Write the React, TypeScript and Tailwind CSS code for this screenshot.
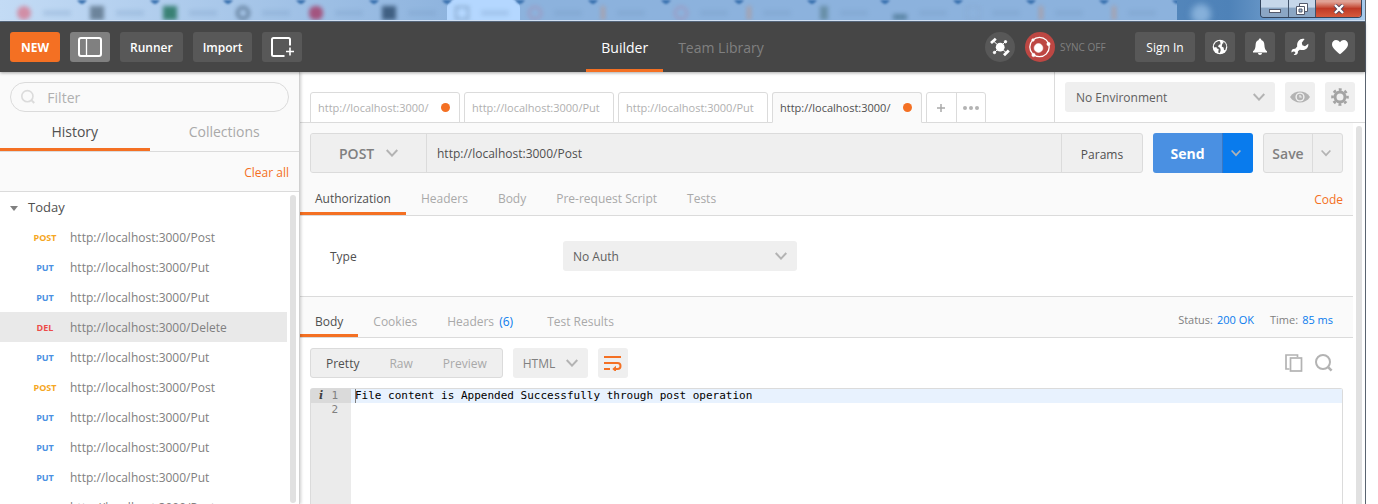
import React from "react";

type IconProps = { className?: string };

const browserTabs = [
  { icon: "bg-[#d67c93] rounded-full", current: false },
  { icon: "bg-[#5a7187]", current: false },
  { icon: "bg-[#1c6f57]", current: false },
  { icon: "border-3 border-[#4a6580] rounded-full", current: false },
  { icon: "bg-[#a53a66] rounded-md", current: false },
  { icon: "bg-[#2b4a6b]", current: false },
  { icon: "border-2 border-[#7d9dc0]", current: true },
  { icon: "border-2 border-[#a58fb4] rounded-full", current: false },
  { icon: "bg-[#b09c9c] w-1", current: false },
  { icon: "border-2 border-[#a58fb4] rounded-full", current: false },
  { icon: "bg-[#b09c9c] w-1", current: false },
  { icon: "bg-[#5f869a] w-2", current: false },
  { icon: "bg-[#4f7a98] h-1.5", current: false },
  { icon: "border border-[#86a4c8]", current: false },
  { icon: "bg-[#b09c9c] w-1", current: false },
  { icon: "bg-[#b09c9c] w-1", current: false },
];

const history = [
  { method: "POST", url: "http://localhost:3000/Post" },
  { method: "PUT", url: "http://localhost:3000/Put" },
  { method: "PUT", url: "http://localhost:3000/Put" },
  { method: "DEL", url: "http://localhost:3000/Delete", selected: true },
  { method: "PUT", url: "http://localhost:3000/Put" },
  { method: "POST", url: "http://localhost:3000/Post" },
  { method: "PUT", url: "http://localhost:3000/Put" },
  { method: "PUT", url: "http://localhost:3000/Put" },
  { method: "PUT", url: "http://localhost:3000/Put" },
  { method: "POST", url: "http://localhost:3000/Post" },
];

const methodColors: Record<string, string> = {
  POST: "text-[#f5a623]",
  PUT: "text-[#4a90e2]",
  DEL: "text-[#ed4b48]",
};

const requestTabs = [
  { label: "http://localhost:3000/", dirty: true, active: false },
  { label: "http://localhost:3000/Put", dirty: false, active: false },
  { label: "http://localhost:3000/Put", dirty: false, active: false },
  { label: "http://localhost:3000/", dirty: true, active: true },
];

function Chevron({ className = "" }: IconProps) {
  return (
    <svg viewBox="0 0 12 8" className={className} fill="none" stroke="currentColor" strokeWidth="2" aria-hidden="true">
      <path d="M.7 1 6 6.6 11.3 1" />
    </svg>
  );
}

function SearchIcon({ className = "" }: IconProps) {
  return (
    <svg viewBox="0 0 18 18" className={className} fill="none" stroke="currentColor" aria-hidden="true">
      <circle cx="8" cy="8" r="7" strokeWidth="2" />
      <path d="m12.6 12.6 4 4" strokeWidth="2.6" />
    </svg>
  );
}

function SidebarIcon() {
  return (
    <svg viewBox="0 0 24 20" className="h-5 w-6" fill="none" stroke="#fff" aria-hidden="true">
      <rect x="1" y="1" width="22" height="18" rx="2" strokeWidth="2" />
      <path d="M8.5 2v16" strokeWidth="1.3" />
    </svg>
  );
}

function NewWindowIcon() {
  return (
    <svg viewBox="0 0 24 20" className="h-5 w-6" fill="none" stroke="#fff" aria-hidden="true">
      <path d="M20 8.5V2.5Q20 1 18.500 1H3.500Q2 1 2 2.500V17.500Q2 19 3.500 19H14.500" strokeWidth="2" />
      <path d="M20 10.500V18.500M16 14.500H24" strokeWidth="1.6" />
    </svg>
  );
}

function SatelliteIcon() {
  return (
    <svg viewBox="0 0 30 30" className="size-[30px]" fill="#fff" stroke="#fff" aria-hidden="true">
      <path d="M9 9.500 21 20.500M20.300 9.700 9.700 20.300" strokeWidth="1" />
      <circle cx="15.200" cy="15.200" r="4.400" stroke="none" />
      <path d="m6 11 4.800-4.200M19 23.200l4.800-4.800" strokeWidth="2.800" />
      <circle cx="20.500" cy="9.700" r="1.200" />
      <circle cx="9.500" cy="20.500" r="1.200" />
    </svg>
  );
}

function OrbitIcon() {
  return (
    <svg viewBox="0 0 30 30" className="size-[30px]" fill="#fff" stroke="#fff" aria-hidden="true">
      <circle cx="14.500" cy="15" r="9.700" fill="none" strokeWidth="1.300" />
      <circle cx="13.500" cy="16" r="4.400" strokeWidth="0.500" />
      <circle cx="8" cy="8" r="1.300" strokeWidth="0.500" />
      <circle cx="23.500" cy="12" r="1.700" strokeWidth="0.500" />
      <circle cx="8.500" cy="23" r="1.700" strokeWidth="0.500" />
    </svg>
  );
}

function GlobeIcon() {
  return (
    <svg viewBox="0 0 16 16" className="size-4" aria-hidden="true">
      <circle cx="8" cy="8" r="7.300" fill="#fff" />
      <path d="M8 2.300 6.500 2 3.600 3.600 1.800 6.500 2.200 8.600 4.300 7.900 5 9.400 6.700 10 6.200 13.600 7.800 14 8.700 11.300 8.200 9 6 7.400 7 5.800 8.600 5.200Z" fill="#585858" />
      <path d="m10.500 2.200 2.700 1.900 1.200 3-1.200 4.200-1.200-.3-.4-2.400-1.900-1.200.6-2.600 1.400-.8Z" fill="#585858" />
    </svg>
  );
}

function BellIcon() {
  return (
    <svg viewBox="0 0 16 18" className="h-[18px] w-4" fill="#fff" aria-hidden="true">
      <path d="M8 .5c.8 0 1.300.6 1.300 1.400 2.200.6 3 2.600 3.100 5.100.1 3 .8 5 2.600 6.200v1.300H1v-1.300C2.800 12 3.500 10 3.600 7c.1-2.500.9-4.500 3.100-5.100C6.700 1.100 7.200.5 8 .5ZM6 15h4c0 1.300-.9 2-2 2s-2-.7-2-2Z" />
    </svg>
  );
}

function WrenchIcon() {
  return (
    <svg viewBox="0 0 18 18" className="size-[18px]" fill="#fff" aria-hidden="true">
      <path d="M13.600 1.100 10.800 4.800l.6 2.500 2.600.9 3.300-2.500c.4 3-1.500 6-4.600 6.200-1.500.2-2.700-.1-3.900-.2l-1.900 1.500c.5 2.700-2 4.500-4.200 3.500l1.800-1.600-.7-1.400-1.600-.3L.500 14.500c-.5-2.300 1.400-4 3.500-3.600L6.200 8.500C5.500 4 8.800-.3 13.600 1.100Z" />
    </svg>
  );
}

function HeartIcon() {
  return (
    <svg viewBox="0 0 18 16" className="h-4 w-[18px]" fill="#fff" aria-hidden="true">
      <path d="M9 15.200C5.500 12.300 1 9 1 5.200 1 .7 6.500-.7 9 3.300c2.500-4 8-2.600 8 1.900 0 3.800-4.500 7.100-8 10Z" />
    </svg>
  );
}

function EyeIcon() {
  return (
    <svg viewBox="0 0 20 12" className="h-3 w-5" aria-hidden="true">
      <path d="M0 6C4.500-1.300 15.500-1.300 20 6 15.500 13.300 4.500 13.300 0 6Z" fill="#b3b3b3" />
      <circle cx="10" cy="6" r="4.600" fill="#efefef" />
      <circle cx="10" cy="6" r="3.200" fill="#b3b3b3" />
      <path d="M10 4V6h1.800" stroke="#efefef" fill="none" strokeWidth="1.200" />
    </svg>
  );
}

function GearIcon() {
  return (
    <svg viewBox="0 0 18 18" className="size-[18px]" fill="none" stroke="#a3a3a3" aria-hidden="true">
      <circle cx="9" cy="9" r="5" strokeWidth="3" />
      <circle cx="9" cy="9" r="7.500" strokeWidth="2.600" strokeDasharray="2.900 2.990" strokeDashoffset="1.450" />
    </svg>
  );
}

function WrapIcon() {
  return (
    <svg viewBox="0 0 18 16" className="h-4 w-[18px]" fill="none" stroke="#f47023" strokeWidth="2" aria-hidden="true">
      <path d="M0 2h17M0 8h13.500c4 0 4 6 0 6h-3M0 14h6" />
      <path d="M8.300 14 12 10.800v6.400Z" fill="#f47023" stroke="none" />
    </svg>
  );
}

function CopyIcon() {
  return (
    <svg viewBox="0 0 18 18" className="size-[18px]" fill="none" stroke="#b3b3b3" strokeWidth="1.700" aria-hidden="true">
      <path d="M12.500 3V1H1v14h3.500" />
      <rect x="5.500" y="4" width="11" height="13" />
    </svg>
  );
}

function TitleBar() {
  return (
    <div className="shrink-0 border-b border-[#5a6b80]">
      <div className="flex h-[21px] justify-between overflow-hidden border-b border-[#d3e3f5] bg-linear-to-r from-[#b5d3f3] via-[#4e82b8] via-90% to-[#a8cbed]">
        <div className="flex overflow-hidden bg-linear-to-r from-[#c3dbf5] to-[#8cb2dd] to-40% pl-[9px]">
          {browserTabs.map((tab, i) => (
            <div key={i} className={tab.current ? "flex w-[73px] rounded-t-lg bg-[#b4d7ff]" : "flex w-[73px]"}>
              <div className="flex grow items-end gap-3 pl-2 opacity-80 blur-[2px]">
                <span className={`size-3.5 ${tab.icon}`} />
                <span className="mb-1 h-1.5 w-7 bg-[#6f94bd]/30" />
              </div>
              <svg viewBox="0 0 12 6" className="-mr-1.5 h-1.5 w-3 blur-[1px]" aria-hidden="true">
                <path d="M1 0h10Q8 4 6 4T1 0Z" fill="#3870ae" />
              </svg>
            </div>
          ))}
        </div>
        <div className="flex grow pl-3.5 pt-1">
          <span className="size-5 rounded-full bg-[#86b0da] blur-[3px]" />
        </div>
        <div className="mr-[3px] flex h-[18px] overflow-hidden rounded-b border border-t-0 border-[#33445c]">
          <button aria-label="Minimize" className="grid w-7 place-items-center border-r border-[#41526a] bg-linear-to-b from-[#c6d7ea] from-40% to-[#8ba6c4] to-50%">
            <span className="mt-1 h-1 w-3 border border-[#53596b] bg-white" />
          </button>
          <button aria-label="Restore" className="grid w-[27px] place-items-center border-r border-[#41526a] bg-linear-to-b from-[#c6d7ea] from-40% to-[#8ba6c4] to-50%">
            <svg viewBox="0 0 12 12" className="size-3" fill="#fff" stroke="#53596b" aria-hidden="true">
              <path d="M3.500.5h8v8h-8Z" />
              <path d="M.5 3.500h8v8h-8Z" />
              <path d="M3 6h3v3H3Z" fill="#9db5cf" />
            </svg>
          </button>
          <button aria-label="Close" className="grid w-[45px] place-items-center bg-linear-to-b from-[#e0a295] from-10% via-[#bf3a26] via-50% to-[#d6593c]">
            <svg viewBox="0 0 12 10" className="h-2.5 w-3" fill="none" aria-hidden="true">
              <path d="m2 1 8 8M10 1 2 9" stroke="#53455a" strokeWidth="4" />
              <path d="m2 1 8 8M10 1 2 9" stroke="#fff" strokeWidth="2.400" />
            </svg>
          </button>
        </div>
      </div>
    </div>
  );
}

function Header() {
  const square = "grid size-[30px] place-items-center rounded-[3px] bg-[#585858]";
  const text = "h-[30px] rounded-[3px] bg-[#585858] pt-0.5 text-xs text-white";
  return (
    <header className="z-10 grid h-[50px] shrink-0 grid-cols-[1fr_auto_1fr] bg-[#464646] px-2.5 shadow-[0_1px_3px_rgba(0,0,0,0.35)]">
      <div className="flex items-center gap-2.5">
        <button className="h-[30px] w-[50px] rounded-[3px] bg-[#f47023] pt-0.5 text-xs font-bold text-white">NEW</button>
        <button aria-label="Toggle sidebar" className="grid h-[30px] w-10 place-items-center rounded-[3px] bg-[#808080]"><SidebarIcon /></button>
        <button className={`${text} px-2.5 font-semibold`}>Runner</button>
        <button className={`${text} px-2.5 font-semibold`}>Import</button>
        <button aria-label="New window" className="grid h-[30px] w-10 place-items-center rounded-[3px] bg-[#585858]"><NewWindowIcon /></button>
      </div>
      <nav className="flex text-sm">
        <a href="#builder" className="flex items-center border-b-3 border-[#f47023] px-[15px] pt-1 font-medium text-white">Builder</a>
        <a href="#library" className="flex items-center border-b-3 border-transparent px-[15px] pt-1 text-[#808080]">Team Library</a>
      </nav>
      <div className="flex items-center justify-end gap-2.5">
        <button aria-label="Interceptor" className="rounded-full bg-[#585858]"><SatelliteIcon /></button>
        <div className="flex w-[100px] items-center gap-[5px]">
          <button aria-label="Sync" className="rounded-full bg-[#bd4743]"><OrbitIcon /></button>
          <span className="text-[10px] whitespace-nowrap text-[#808080]">SYNC OFF</span>
        </div>
        <button className={`${text} w-[60px] font-medium`}>Sign In</button>
        <button aria-label="Browse" className={square}><GlobeIcon /></button>
        <button aria-label="Notifications" className={square}><BellIcon /></button>
        <button aria-label="Settings" className={square}><WrenchIcon /></button>
        <button aria-label="Favourites" className={square}><HeartIcon /></button>
      </div>
    </header>
  );
}

function Sidebar() {
  return (
    <aside className="z-[5] flex w-[300px] shrink-0 flex-col border-r border-[#d0d0d0] bg-[#fafafa] shadow-[1px_0_3px_rgba(0,0,0,0.2)]">
      <label className="mx-2.5 mt-2.5 flex h-[30px] shrink-0 items-center gap-3 rounded-full border border-[#dbdbdb] px-2.5 text-[#dbdbdb]">
        <SearchIcon className="size-4" />
        <input aria-label="Filter" placeholder="Filter" className="w-full bg-transparent pt-0.5 text-sm text-[#505050] outline-none placeholder:text-[#b0b0b0]" />
      </label>
      <div className="flex h-10 shrink-0 border-b border-[#dbdbdb] text-sm">
        <button className="flex-1 border-b-3 border-[#f47023] pt-1 text-[#505050]">History</button>
        <button className="flex-1 border-b-3 border-transparent pt-1 text-[#a9a9a9]">Collections</button>
      </div>
      <div className="flex h-10 shrink-0 items-center justify-end border-b border-[#dbdbdb] px-2.5 pt-0.5">
        <button className="text-xs text-[#f47023]">Clear all</button>
      </div>
      <div className="flex min-h-0 grow bg-white">
        <div className="grow overflow-hidden">
          <button className="flex h-[30px] items-center gap-2.5 pt-0.5 pl-2.5 text-[13px] text-[#505050]">
            <svg viewBox="0 0 8 5" className="h-[5px] w-2" aria-hidden="true"><path d="M0 0h8L4 5Z" fill="#808080" /></svg>
            Today
          </button>
          <ul>
            {history.map((item, i) => (
              <li key={i} className={item.selected ? "bg-[#e9e9e9]" : ""}>
                <a href="#request" className="flex h-[30px] items-center pt-0.5 pl-5 text-xs text-[#808080]">
                  <span className={`w-[50px] text-center text-[9px] font-bold ${methodColors[item.method]}`}>{item.method}</span>
                  {item.url}
                </a>
              </li>
            ))}
          </ul>
        </div>
        <div className="mx-[3px] mt-[3px] mb-px w-1.5 shrink-0 rounded-full bg-[#e1e1e1]" />
      </div>
    </aside>
  );
}

function Picker({ label, value, box, select, chevron }: { label: string; value: string; box: string; select: string; chevron: string }) {
  return (
    <div className={`grid items-center bg-[#efefef] ${box}`}>
      <select aria-label={label} className={`col-start-1 row-start-1 h-full w-full appearance-none bg-transparent pt-0.5 outline-none ${select}`}>
        <option>{value}</option>
      </select>
      <Chevron className={`pointer-events-none col-start-1 row-start-1 h-2 w-3 justify-self-end text-[#b3b3b3] ${chevron}`} />
    </div>
  );
}

function TabStrip() {
  return (
    <div className="flex h-[51px] shrink-0">
      <div className="flex min-w-0 grow items-end border-b border-[#dbdbdb] pl-2.5">
        <div className="-mb-px flex gap-1 text-[11px]">
          {requestTabs.map((tab, i) => (
            <button
              key={i}
              className={`flex h-[31px] w-[150px] items-center justify-between rounded-t-[3px] border border-[#dbdbdb] px-[7px] pt-0.5 ${
                tab.active ? "border-b-[#fafafa] bg-[#fafafa] text-[#505050]" : "bg-white text-[#b0b0b0]"
              }`}
            >
              {tab.label}
              {tab.dirty && <span className="mr-0.5 mb-0.5 size-[9px] rounded-full bg-[#f47023]" />}
            </button>
          ))}
          <div className="flex h-[31px] w-[60px] divide-x divide-[#dbdbdb] rounded-t-[3px] border border-[#dbdbdb]">
            <button aria-label="Add tab" className="grid flex-1 place-items-center">
              <svg viewBox="0 0 8 8" className="size-2" aria-hidden="true"><path d="M4 0v8M0 4h8" stroke="#a9a9a9" strokeWidth="1.500" /></svg>
            </button>
            <button aria-label="More tabs" className="grid flex-1 place-items-center">
              <svg viewBox="0 0 16 4" className="h-1 w-4" fill="#b3b3b3" aria-hidden="true"><circle cx="2" cy="2" r="2" /><circle cx="8" cy="2" r="2" /><circle cx="14" cy="2" r="2" /></svg>
            </button>
          </div>
        </div>
      </div>
      <div className="flex shrink-0 items-center gap-2.5 border-b border-l border-[#dbdbdb] px-2.5">
        <Picker label="Environment" value="No Environment" box="h-[30px] w-[210px] rounded-[3px]" select="pl-[11px] text-xs text-[#606060]" chevron="mr-2.5" />
        <button aria-label="Quick look" className="grid size-[30px] place-items-center rounded-[3px] bg-[#efefef]"><EyeIcon /></button>
        <button aria-label="Manage environments" className="grid size-[30px] place-items-center rounded-[3px] bg-[#efefef]"><GearIcon /></button>
      </div>
    </div>
  );
}

function SectionTab({ active = false, children }: { active?: boolean; children: React.ReactNode }) {
  return (
    <button className={`border-b-3 px-[15px] pt-3 ${active ? "border-[#f47023] text-[#505050]" : "border-transparent text-[#a9a9a9]"}`}>
      {children}
    </button>
  );
}

function RequestPanel() {
  return (
    <section>
      <div className="border-b border-[#dbdbdb] bg-[#fafafa]">
        <div className="flex h-[50px] gap-2.5 px-2.5 pt-2.5">
          <div className="flex grow divide-x divide-[#dbdbdb] overflow-hidden rounded-[3px] border border-[#dbdbdb] bg-[#efefef]">
            <Picker label="Method" value="POST" box="w-[116px]" select="pl-7 text-sm font-semibold text-[#808080]" chevron="mr-7" />
            <input aria-label="Request URL" defaultValue="http://localhost:3000/Post" className="min-w-0 grow bg-transparent px-2.5 pt-0.5 text-xs text-[#505050] outline-none" />
            <button className="w-20 pt-1 text-xs text-[#505050]">Params</button>
          </div>
          <div className="flex w-[100px] overflow-hidden rounded-[3px] text-white">
            <button className="w-[69px] bg-[#4a90e2] pt-0.5 text-sm font-bold">Send</button>
            <button aria-label="Send options" className="grid grow place-items-center border-l border-[#3a78c4] bg-[#097bed] pr-1 text-[#b3b3b3]"><Chevron className="h-2 w-2.5" /></button>
          </div>
          <div className="flex w-20 divide-x divide-[#dbdbdb] overflow-hidden rounded-[3px] border border-[#dbdbdb] bg-[#efefef]">
            <button className="w-[49px] pt-0.5 text-sm font-semibold text-[#808080]">Save</button>
            <button aria-label="Save options" className="grid grow place-items-center pr-1 text-[#b3b3b3]"><Chevron className="h-2 w-2.5" /></button>
          </div>
        </div>
        <div className="flex h-[42px] justify-between text-xs">
          <div className="flex">
            <SectionTab active>Authorization</SectionTab>
            <SectionTab>Headers</SectionTab>
            <SectionTab>Body</SectionTab>
            <SectionTab>Pre-request Script</SectionTab>
            <SectionTab>Tests</SectionTab>
          </div>
          <button className="px-2.5 pt-3 text-[#f47023]">Code</button>
        </div>
      </div>
      <div className="flex h-20 items-center pl-[30px] text-xs text-[#505050]">
        <span className="w-[233px] pt-0.5">Type</span>
        <Picker label="Authorization type" value="No Auth" box="h-[30px] w-[234px] rounded-[3px]" select="pl-2.5 text-xs text-[#606060]" chevron="mr-2.5" />
      </div>
    </section>
  );
}

function ResponsePanel() {
  return (
    <section className="flex min-h-0 grow flex-col">
      <div className="flex h-[42px] shrink-0 justify-between border-y border-[#dbdbdb] bg-[#fafafa] text-xs">
        <div className="flex">
          <SectionTab active>Body</SectionTab>
          <SectionTab>Cookies</SectionTab>
          <SectionTab>Headers <span className="mr-1 ml-0.5 text-[#097bed]">(6)</span></SectionTab>
          <SectionTab>Test Results</SectionTab>
        </div>
        <div className="flex items-center gap-4 pt-1.5 pr-5 text-[11px] text-[#808080]">
          <span className="flex gap-1">Status: <span className="text-[#097bed]">200 OK</span></span>
          <span className="flex gap-1">Time: <span className="text-[#097bed]">85 ms</span></span>
        </div>
      </div>
      <div className="flex shrink-0 items-center gap-2.5 px-2.5 py-2.5 text-xs">
        <div className="flex h-[30px] rounded-[3px] border border-[#dbdbdb] bg-[#efefef] text-[#a9a9a9]">
          <button className="px-[15px] pt-0.5 text-[#505050]">Pretty</button>
          <button className="px-[15px] pt-0.5">Raw</button>
          <button className="px-[15px] pt-0.5">Preview</button>
        </div>
        <Picker label="Response format" value="HTML" box="h-[30px] w-[75px] rounded-[3px]" select="pl-2.5 text-[#808080]" chevron="mr-2.5" />
        <button aria-label="Wrap lines" className="grid size-[30px] place-items-center rounded-[3px] bg-[#efefef]"><WrapIcon /></button>
        <div className="ml-auto flex gap-3 pr-2.5 text-[#b3b3b3]">
          <button aria-label="Copy"><CopyIcon /></button>
          <button aria-label="Search"><SearchIcon className="size-[18px]" /></button>
        </div>
      </div>
      <div className="mx-2.5 flex min-h-0 grow rounded-t-[3px] border border-b-0 border-[#dbdbdb] font-['DejaVu_Sans_Mono',monospace] text-[11px] leading-[14px]">
        <div className="w-10 shrink-0 bg-[#ebebeb] text-[#808080]">
          <div className="flex justify-between bg-[#dadada] pr-[13px] pl-2">
            <span className="font-['DejaVu_Serif',serif] font-bold text-[#404040] italic">i</span>
            <span>1</span>
          </div>
          <div className="pr-[13px] text-right">2</div>
        </div>
        <div className="grow">
          <div className="flex bg-[#e8f2fe] pl-1 text-black">
            <span className="-mr-px w-px bg-[#808080]" />
            File content is Appended Successfully through post operation
          </div>
        </div>
      </div>
    </section>
  );
}

export default function App() {
  return (
    <div className="h-screen overflow-hidden bg-white pr-3 font-['Open_Sans',sans-serif]">
      <div className="flex h-full flex-col border-r border-[#5a6470]">
        <TitleBar />
        <Header />
        <div className="flex min-h-0 grow">
          <Sidebar />
          <main className="flex min-w-0 grow flex-col">
            <TabStrip />
            <div className="flex min-h-0 grow">
              <div className="flex min-w-0 grow flex-col">
                <RequestPanel />
                <ResponsePanel />
              </div>
              <div className="mx-[3px] mt-[3px] w-1.5 shrink-0 rounded-t-full bg-[#e1e1e1]" />
            </div>
          </main>
        </div>
      </div>
    </div>
  );
}
